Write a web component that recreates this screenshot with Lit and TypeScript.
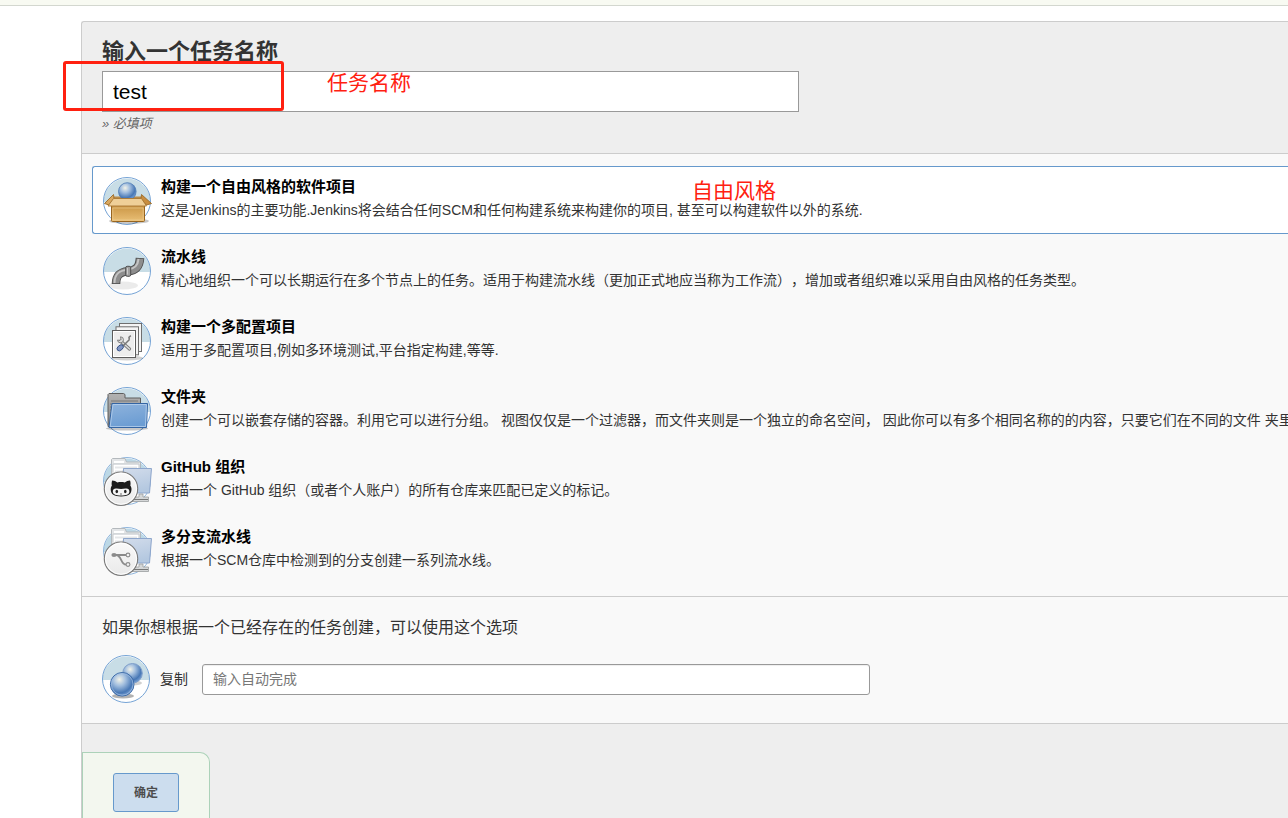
import { LitElement, html, svg, css, SVGTemplateResult } from "lit";
import { customElement, state } from "lit/decorators.js";

const disc = svg`
  <circle cx="24" cy="24" r="23.5" fill="#fff" />
  <path d="M.5 25a23.5 23.5 0 0 1 47 0z" fill="#c8dde6" />
  <circle cx="24" cy="24" r="23.5" fill="none" stroke="#76a4d6" />`;

const paleFolder = svg`
  <circle cx="24" cy="24" r="23.5" fill="#fff" />
  <path d="M.5 25a23.5 23.5 0 0 1 47 0z" fill="#bcd8e6" />
  <circle cx="24" cy="24" r="23.5" fill="none" stroke="#8db4dc" />
  <path d="M8.5 17V2.5l1-1H22l1.5 3.500H37.500V12H20v6z" fill="#e4e6e8" stroke="#b4b9bd" />
  <path d="M11 15V8.500h24V12M11 12.500h9M11 5h10" fill="none" stroke="#fff" stroke-width="2" />
  <path d="M10 15V7h26v4" fill="none" stroke="#c5cacd" />
  <path d="M20.500 11.500H48.500L46.500 36H20z" fill="url(#pale)" stroke="#8ea6cc" />
  <path d="M36 37h4v3h5.500v4.500H28V40h8z" fill="#d5d7d8" stroke="#9b9d9e" stroke-width=".8" />
  <path d="M29 42.500h16" stroke="#777" stroke-width="1" />
  <circle cx="18" cy="31.700" r="16.700" fill="url(#badge)" stroke="#7c7c7c" stroke-width="1.200" />
  <circle cx="18" cy="31.700" r="15.600" fill="none" stroke="#fff" stroke-width="1" />`;

const icons: Record<string, SVGTemplateResult> = {
  box: svg`${disc}
    <ellipse cx="26" cy="44" rx="20" ry="3" fill="#000" opacity=".22" />
    <path d="M10.500 19.500L38.500 19.500 42 29H7z" fill="#b98c4a" />
    <circle cx="24.300" cy="14.500" r="8.800" fill="url(#ball)" stroke="#4a78b4" stroke-width=".8" />
    <path d="M10.500 17.500L1.500 26.500 6 28 11 21.500z" fill="#d9a860" stroke="#9a6a28" stroke-width=".9" stroke-linejoin="round" />
    <path d="M38.500 17.500L48.500 26.500 43.500 28 38 21.500z" fill="#c98d3e" stroke="#9a6a28" stroke-width=".9" stroke-linejoin="round" />
    <rect x="8.500" y="28" width="33" height="16.500" rx="1" fill="url(#carton)" stroke="#98651f" />
    <path d="M9.800 31h30.400v12H9.800z" fill="none" stroke="#f2d49c" stroke-width=".7" opacity=".8" />
    <path d="M10.500 21.500h28L43.500 29H5z" fill="#efcf98" stroke="#a87733" stroke-width=".9" stroke-linejoin="round" />`,
  pipe: svg`${disc}
    <ellipse cx="20" cy="38.500" rx="15" ry="4" fill="#000" opacity=".08" />
    <path d="M13 37C13 28 17 25 25 24.200 33 23.500 36.500 20 37 11" fill="none" stroke="#4e4e4e" stroke-width="8.600" />
    <path d="M13 36.200C13 28 17 25 25 24.200 33 23.500 36.500 20 37 11.800" fill="none" stroke="#8d8d8d" stroke-width="6.800" />
    <path d="M11.500 36C11.500 27 16 23.500 24.500 22.700 31 22 35 19 35.500 12" fill="none" stroke="#c4c4c4" stroke-width="2" />
    <rect x="22.700" y="19.300" width="5" height="10" rx="1.500" fill="#a0a0a0" stroke="#4e4e4e" />
    <path d="M24.500 21v6.500" stroke="#ccc" />`,
  pages: svg`${disc}
    <ellipse cx="24" cy="41" rx="16" ry="2.500" fill="#000" opacity=".18" />
    <rect x="16.500" y="6.500" width="22" height="28" fill="#f4f4f4" stroke="#6f6f6f" />
    <rect x="13" y="9.800" width="22.500" height="28" fill="#f4f4f4" stroke="#6f6f6f" />
    <rect x="9.500" y="13.500" width="23" height="27" fill="#ededed" stroke="#5c5c5c" />
    <path d="M10.500 39.500v-25h21v25z" fill="none" stroke="#fff" />
    <path d="M17.500 24L26.500 32" stroke="#777" stroke-width="3.200" stroke-linecap="round" />
    <path d="M17.500 24L26.500 32" stroke="#ddd" stroke-width="1.500" stroke-linecap="round" />
    <path d="M17.500 19.800a3 3 0 1 1-3 3.200l2.500.500 1-1z" fill="#ddd" stroke="#777" stroke-width=".9" />
    <path d="M20 29L26.500 22.500M26.300 22.700l-.300-2.500 1.800-1.500" fill="none" stroke="#777" stroke-width="1.500" />
    <ellipse cx="17.200" cy="30.800" rx="3.600" ry="2.400" transform="rotate(-42 17.200 30.800)" fill="#8297c4" stroke="#334d82" stroke-width=".9" />`,
  folder: svg`${disc}
    <ellipse cx="24" cy="41.500" rx="21" ry="2" fill="#000" opacity=".22" />
    <path d="M5 39.500V7.500l1-1H20.500l1.500 1V11H37.500V39.500z" fill="url(#grey)" stroke="#5e5e5e" />
    <path d="M8 14h27M7 17h3M7 20h2M7 23h2M7 26h2M7 29h2" stroke="#6c6c6c" stroke-width=".8" />
    <path d="M9 16.500H44.500L43.500 40.500H6z" fill="url(#blue)" stroke="#3465a4" stroke-linejoin="round" />
    <path d="M10 17.500H43.400L42.500 39.500H7.200z" fill="none" stroke="#b8d0ec" stroke-width=".8" />`,
  github: svg`${paleFolder}
    <path d="M9.200 23.500c2 0 3.700.900 5.200 1.900 2.400-.5 5-.5 7.400 0 1.500-1 3.200-1.900 5.200-1.900.7 1.800.7 3.600.3 5 .900 1.200 1.300 2.500 1.200 4-.2 5-3.500 6.900-10.400 6.900s-10.200-1.900-10.400-6.900c0-1.500.3-2.800 1.200-4-.4-1.400-.4-3.200.3-5z" fill="#1c1c1c" />
    <path d="M13.500 31.500c3 .5 6 .5 9.200 0 2.300-.3 3.700 1 3.700 2.900 0 3-3.400 4-8.300 4s-8.300-1-8.300-4c0-1.900 1.400-3.200 3.700-2.900z" fill="#f4f4f4" />
    <ellipse cx="13.800" cy="34.500" rx="1.300" ry="1.800" fill="#222" />
    <ellipse cx="22.300" cy="34.500" rx="1.300" ry="1.800" fill="#222" />
    <path d="M17 37h2" stroke="#333" stroke-width=".7" />`,
  branch: svg`${paleFolder}
    <path d="M11 28H23M13 28c6 .5 4.500 9.500 10 9.500" fill="none" stroke="#8b8b8b" stroke-width="1.800" />
    <ellipse cx="11" cy="28" rx="2.600" ry="2" fill="#8b8b8b" />
    <circle cx="25" cy="28" r="1.900" fill="#f3f3f3" stroke="#8b8b8b" stroke-width="1.100" />
    <circle cx="25" cy="37.500" r="1.900" fill="#f3f3f3" stroke="#8b8b8b" stroke-width="1.100" />`,
  copy: svg`${disc}
    <ellipse cx="31" cy="28" rx="9" ry="2.500" fill="#000" opacity=".18" />
    <circle cx="30.500" cy="18.300" r="9.800" fill="url(#ball)" stroke="#7f9fca" />
    <ellipse cx="21" cy="41" rx="11" ry="2.500" fill="#000" opacity=".3" />
    <circle cx="20.200" cy="29.300" r="11.800" fill="url(#ball)" stroke="#3e6ca8" />
    <circle cx="20.200" cy="29.300" r="10.800" fill="none" stroke="#a5c0e2" stroke-width=".7" />`,
};

const icon = (name: string) =>
  html`<svg class="icon" viewBox="0 0 48 48" aria-hidden="true">${icons[name]}</svg>`;

const jobTypes = [
  { icon: "box", title: "构建一个自由风格的软件项目", text: "这是Jenkins的主要功能.Jenkins将会结合任何SCM和任何构建系统来构建你的项目, 甚至可以构建软件以外的系统." },
  { icon: "pipe", title: "流水线", text: "精心地组织一个可以长期运行在多个节点上的任务。适用于构建流水线（更加正式地应当称为工作流），增加或者组织难以采用自由风格的任务类型。" },
  { icon: "pages", title: "构建一个多配置项目", text: "适用于多配置项目,例如多环境测试,平台指定构建,等等." },
  { icon: "folder", title: "文件夹", text: "创建一个可以嵌套存储的容器。利用它可以进行分组。 视图仅仅是一个过滤器，而文件夹则是一个独立的命名空间， 因此你可以有多个相同名称的的内容，只要它们在不同的文件 夹里即可。" },
  { icon: "github", title: "GitHub 组织", text: "扫描一个 GitHub 组织（或者个人账户）的所有仓库来匹配已定义的标记。" },
  { icon: "branch", title: "多分支流水线", text: "根据一个SCM仓库中检测到的分支创建一系列流水线。" },
];

@customElement("app-root")
export class AppRoot extends LitElement {
  @state() private selected = 0;

  static styles = css`
    :host {
      display: flex;
      flex-direction: column;
      position: relative;
      box-sizing: border-box;
      height: 100vh;
      overflow: hidden;
      background: #fff;
      color: #333;
      font: 14px/20px "Liberation Sans", "Noto Sans CJK SC", sans-serif;
      text-spacing-trim: space-all;
    }
    * { box-sizing: border-box; }
    .topbar { flex: none; height: 6px; background: #f8faf2; border-bottom: 1px solid #d3d7cf; }
    .defs { position: absolute; width: 0; height: 0; }
    .panel {
      flex: 1;
      display: flex;
      flex-direction: column;
      margin: 15px 0 0 81px;
      border: 1px solid #ccc;
      border-width: 1px 0 0 1px;
      border-top-left-radius: 3px;
      background: #eee;
    }
    .name { display: block; padding: 16px 20px 19px; border-bottom: 1px solid #ccc; }
    .heading { display: block; height: 33px; font-size: 22px; line-height: 28px; font-weight: bold; }
    .name-input {
      display: block;
      width: 100%;
      max-width: 697px;
      height: 41px;
      padding: 0 10px;
      border: 1px solid #999;
      border-radius: 0;
      background: #fff;
      color: #000;
      font: inherit;
      font-size: 21px;
      outline: 0;
    }
    .required { margin: 2px 0 0; font-size: 13px; font-style: italic; color: #666; }
    .types {
      display: flex;
      flex-direction: column;
      gap: 2px;
      margin: 0;
      padding: 12px 0 12px 10px;
      border: 0;
      border-bottom: 1px solid #ccc;
      background: #f9f9f9;
    }
    .type {
      display: flex;
      gap: 10px;
      padding: 10px 10px 8px;
      border: 1px solid transparent;
      border-right: 0;
      border-radius: 3px 0 0 3px;
      white-space: nowrap;
      cursor: pointer;
    }
    .selected { border-color: #69c; background: #fff; }
    .radio { position: absolute; opacity: 0; margin: 0; }
    .icon { flex: none; display: block; width: 48px; height: 48px; overflow: visible; }
    .title { display: block; padding-bottom: 3px; font-size: 15px; font-weight: bold; color: #000; }
    .text { display: block; }
    .copy { padding: 19px 20px 20px; border-bottom: 1px solid #ccc; background: #f9f9f9; }
    .hint { margin: 0 0 15px; font-size: 16px; line-height: 24px; }
    .copy-row { display: flex; align-items: center; gap: 10px; }
    .copy-input {
      flex: 1;
      max-width: 668px;
      height: 31px;
      margin-left: 4px;
      padding: 0 10px;
      border: 1px solid #999;
      border-radius: 3px;
      background: #fff;
      box-shadow: inset 0 1px 1px #eee;
      font: inherit;
    }
    .copy-input::placeholder { color: #777; }
    .footer { flex: 1; padding-top: 28px; }
    .actions {
      width: 128px;
      height: 100%;
      padding: 20px 30px;
      border: 1px solid #acd2b9;
      border-bottom: 0;
      border-radius: 0 10px 0 0;
      background: #f3f7ef;
    }
    .ok {
      display: block;
      width: 66px;
      height: 39px;
      padding: 0;
      border: 1px solid #69c;
      border-radius: 3px;
      background: #cde;
      color: #4d4d4d;
      font: bold 12px/20px "Liberation Sans", "Noto Sans CJK SC", sans-serif;
    }
    .frame {
      position: absolute;
      left: 63px;
      top: 61px;
      width: 221px;
      height: 50px;
      border: 3px solid #ff2010;
      border-radius: 3px;
      pointer-events: none;
    }
    .note { position: absolute; font-size: 21px; line-height: 28px; color: #ff2010; pointer-events: none; }
    .note-name { left: 327px; top: 69px; }
    .note-style { left: 692px; top: 177px; }
  `;

  render() {
    return html`
      <svg class="defs" aria-hidden="true">
        <defs>
          <radialGradient id="ball" cx=".38" cy=".3" r=".75">
            <stop offset="0" stop-color="#f3f3e8" />
            <stop offset=".35" stop-color="#a3bfdf" />
            <stop offset=".75" stop-color="#4777b5" />
            <stop offset="1" stop-color="#7fa6d8" />
          </radialGradient>
          <linearGradient id="carton" x2="0" y2="1">
            <stop offset="0" stop-color="#c99443" /><stop offset="1" stop-color="#e9bf76" />
          </linearGradient>
          <linearGradient id="grey" x2="0" y2="1">
            <stop offset="0" stop-color="#b3b3b3" /><stop offset="1" stop-color="#858585" />
          </linearGradient>
          <linearGradient id="blue" x2=".3" y2="1">
            <stop offset="0" stop-color="#8fb3dc" /><stop offset="1" stop-color="#6c9dd3" />
          </linearGradient>
          <linearGradient id="pale" x2=".3" y2="1">
            <stop offset="0" stop-color="#d2dceb" /><stop offset="1" stop-color="#b4c8e0" />
          </linearGradient>
          <linearGradient id="badge" x2="0" y2="1">
            <stop offset="0" stop-color="#fafafa" /><stop offset="1" stop-color="#e9e9e9" />
          </linearGradient>
        </defs>
      </svg>
      <div class="topbar"></div>
      <main class="panel">
        <div class="name">
          <label class="heading" for="name">输入一个任务名称</label>
          <input class="name-input" id="name" type="text" value="test" autocomplete="off" />
          <p class="required">» 必填项</p>
        </div>
        <fieldset class="types">
          ${jobTypes.map(
            (job, i) => html`
              <label class="type ${i === this.selected ? "selected" : ""}">
                <input class="radio" type="radio" name="mode" .checked=${i === this.selected}
                  @change=${() => (this.selected = i)} />
                ${icon(job.icon)}
                <span>
                  <span class="title">${job.title}</span>
                  <span class="text">${job.text}</span>
                </span>
              </label>`
          )}
        </fieldset>
        <div class="copy">
          <p class="hint">如果你想根据一个已经存在的任务创建，可以使用这个选项</p>
          <div class="copy-row">
            ${icon("copy")}
            <label for="from">复制</label>
            <input class="copy-input" id="from" type="text" placeholder="输入自动完成" />
          </div>
        </div>
        <div class="footer">
          <div class="actions"><button class="ok" type="submit">确定</button></div>
        </div>
      </main>
      <div class="frame"></div>
      <span class="note note-name">任务名称</span>
      <span class="note note-style">自由风格</span>
    `;
  }
}
